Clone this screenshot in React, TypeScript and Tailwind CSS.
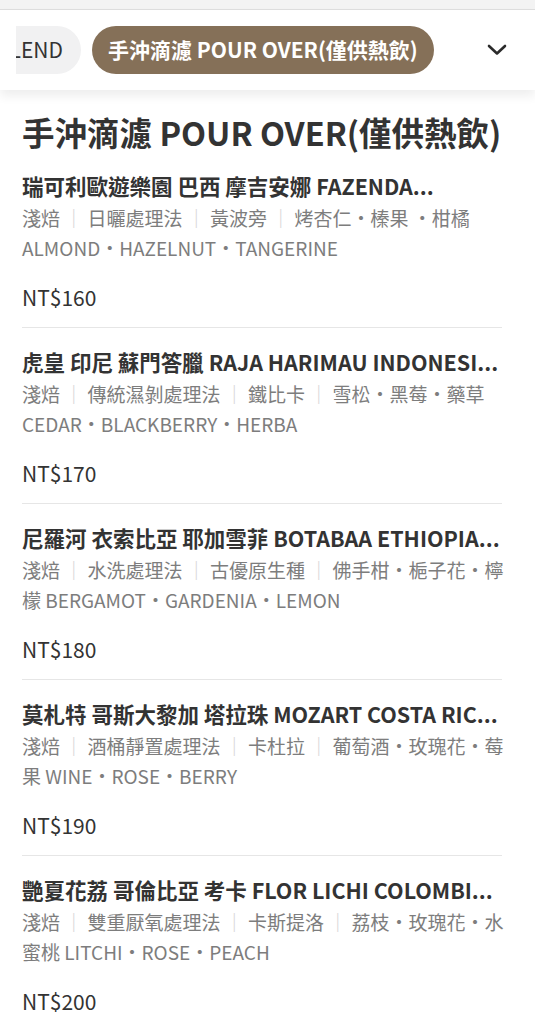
import React from "react";

type Item = {
  name: string;
  tags: string[];
  notes: string;
  price: string;
};

const items: Item[] = [
  {
    name: "瑞可利歐遊樂園 巴西 摩吉安娜 FAZENDA...",
    tags: ["淺焙", "日曬處理法", "黃波旁"],
    notes: "烤杏仁・榛果 ・柑橘 ALMOND・HAZELNUT・TANGERINE",
    price: "NT$160",
  },
  {
    name: "虎皇 印尼 蘇門答臘 RAJA HARIMAU INDONESI...",
    tags: ["淺焙", "傳統濕剝處理法", "鐵比卡"],
    notes: "雪松・黑莓・藥草 CEDAR・BLACKBERRY・HERBA",
    price: "NT$170",
  },
  {
    name: "尼羅河 衣索比亞 耶加雪菲 BOTABAA ETHIOPIA...",
    tags: ["淺焙", "水洗處理法", "古優原生種"],
    notes: "佛手柑・梔子花・檸檬 BERGAMOT・GARDENIA・LEMON",
    price: "NT$180",
  },
  {
    name: "莫札特 哥斯大黎加 塔拉珠 MOZART COSTA RIC...",
    tags: ["淺焙", "酒桶靜置處理法", "卡杜拉"],
    notes: "葡萄酒・玫瑰花・莓果 WINE・ROSE・BERRY",
    price: "NT$190",
  },
  {
    name: "艷夏花荔 哥倫比亞 考卡 FLOR LICHI COLOMBI...",
    tags: ["淺焙", "雙重厭氧處理法", "卡斯提洛"],
    notes: "荔枝・玫瑰花・水蜜桃 LITCHI・ROSE・PEACH",
    price: "NT$200",
  },
];

const Bar = () => <span className="text-[#d4d4d4]"> ｜ </span>;

const MenuItem = ({ item }: { item: Item }) => {
  return (
    <div className="flex flex-col pt-5">
      <h3 className="text-[21.5px] leading-[28px] font-bold text-[#333] whitespace-nowrap">
        {item.name}
      </h3>
      <p className="mt-[3px] text-[19px] leading-[30px] text-[#7d7d7d]">
        {item.tags.map((t) => (
          <React.Fragment key={t}>
            {t}
            <Bar />
          </React.Fragment>
        ))}
        {item.notes}
      </p>
      <span className="mt-5 text-[21px] leading-[28px] text-[#333]">
        {item.price}
      </span>
      <div className="mt-4 w-[480px] border-b border-[#e6e6e6]" />
    </div>
  );
};

export default function App() {
  return (
    <div
      className="w-[535px] min-h-[1024px] bg-white"
      style={{ fontFamily: '"Noto Sans CJK TC", "Noto Sans", sans-serif' }}
    >
      <div className="h-[9px] bg-[#f3f3f3] border-b border-[#dedede] box-content" />
      <div className="relative z-10 h-20 bg-white flex items-center shadow-[0_6px_10px_rgba(0,0,0,0.07)]">
        <div className="flex items-center flex-1 pl-4 overflow-hidden">
          <div className="w-[65px] shrink-0 overflow-hidden flex justify-end">
            <div className="shrink-0 h-12 rounded-full bg-[#f1f1f2] flex items-center pl-5 pr-[18px] text-[21px] text-[#333]">
              BLEND
            </div>
          </div>
          <div className="ml-[11px] shrink-0 h-12 rounded-full bg-[#857058] flex items-center px-4 text-[21px] font-bold text-white">
            手沖滴濾 POUR OVER(僅供熱飲)
          </div>
        </div>
        <div className="w-[85px] flex items-center justify-center pl-[9px]">
          <svg width="20" height="12" viewBox="0 0 20 12" fill="none">
            <polyline
              points="2,2 10,9.5 18,2"
              stroke="#2b2b2b"
              strokeWidth="2.6"
              strokeLinecap="round"
              strokeLinejoin="round"
            />
          </svg>
        </div>
      </div>
      <div className="pl-[22px] pr-[22px]">
        <h2 className="mt-[22px] text-[32.5px] leading-[40px] font-bold text-[#333] whitespace-nowrap">
          手沖滴濾 POUR OVER(僅供熱飲)
        </h2>
        <div className="flex flex-col">
          {items.map((item) => (
            <MenuItem key={item.name} item={item} />
          ))}
        </div>
      </div>
    </div>
  );
}
